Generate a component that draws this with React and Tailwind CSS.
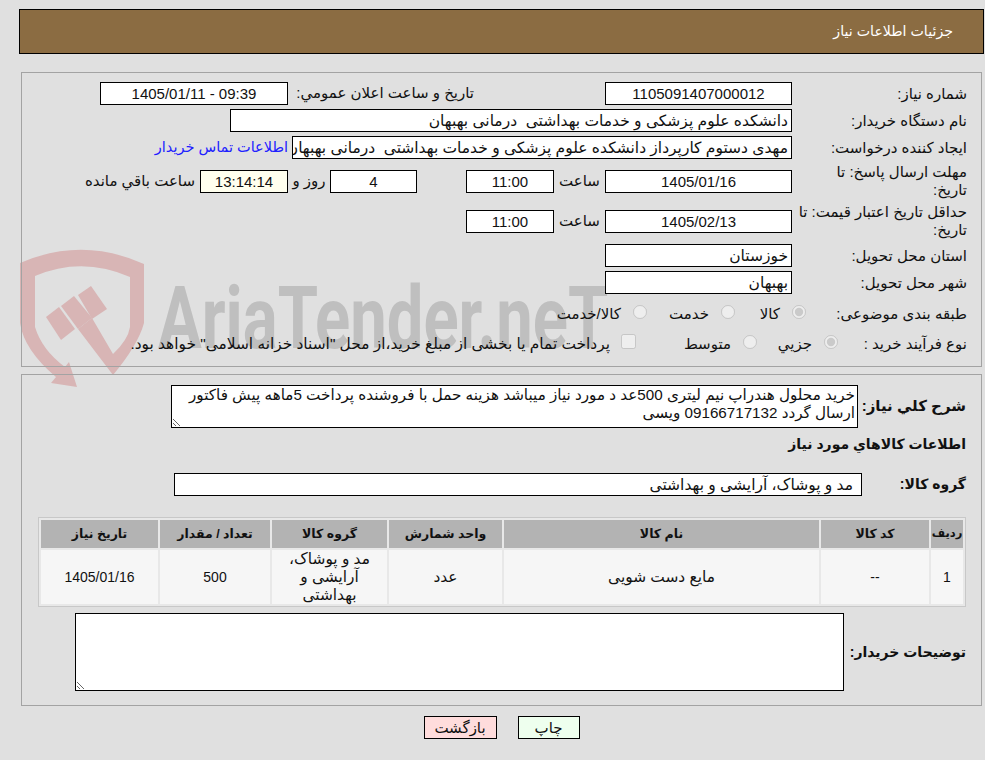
const font = 'font-["Liberation_Sans","DejaVu_Sans",sans-serif]';

// boxed value, same look for every readonly field on the page
const Field = ({ className = '', center, dir, children }) => (
  <div
    dir={dir}
    className={`h-[23px] shrink-0 border border-black bg-white px-[3px] leading-[21px] whitespace-pre overflow-hidden ${center ? 'text-center text-[15px]' : 'text-[15.5px]'} ${className}`}
  >
    {children}
  </div>
);

const Row = ({ label, className = '', children }) => (
  <div className={`flex items-center ${className}`}>
    <div className="w-[175px] shrink-0 leading-[18px]">{label}</div>
    {children}
  </div>
);

const Radio = ({ checked, label, className }) => (
  <div className={`flex items-center shrink-0 ${className}`}>
    <input type="radio" disabled defaultChecked={checked} className="m-0 mb-[5px] w-[14px] h-[14px] shrink-0" />
    <span className="mr-[12px]">{label}</span>
  </div>
);

const Watermark = () => (
  <>
    <svg className="absolute left-0 top-0" width="170" height="395" viewBox="0 0 170 395" fill="#d8b5b5">
      <path d="M20 263 Q82 236 144 264 L144 323 Q138 345 113 375 L78 329 L92 318 L113 354 Q128 340 130 327 L130 277 Q82 256 35 276 L35 327 Q42 350 65 367 L69 362 L77 387 L51 383 L56 377 Q24 350 20 323 Z" />
      <path d="M46 317 L59 307 L75 329 L61 340 Z" />
      <path d="M61 306 L74 296 L92 318 L78 329 Z" />
      <path d="M78 295 L91 286 L107 309 L92 319 Z" />
    </svg>
    <div
      dir="ltr"
      className='absolute left-[158px] top-[266px] origin-left scale-x-[0.74] whitespace-nowrap text-[88px] leading-[104px] font-bold text-[#bfbfbf] font-["Roboto",sans-serif]'
    >
      AriaTender.neT
    </div>
  </>
);

const headers = ['کد کالا', 'نام کالا', 'واحد شمارش', 'گروه کالا', 'تعداد / مقدار', 'تاریخ نیاز'];

const App = () => {
  return (
    <div dir="rtl" className={`relative h-[760px] overflow-hidden bg-[#e0e0e0] text-[15px] text-[#111] ${font}`}>
      <Watermark />

      <div className="relative ml-[19px] mr-[1px] pt-[9px]">
        {/* header bar */}
        <div className="h-[45px] border border-black bg-[#8b6c42] pr-[30px] text-[14.2px] leading-[43px] text-white">
          جزئیات اطلاعات نیاز
        </div>

        {/* main info */}
        <div className="mt-[18px] ml-[2px] mr-[2px] h-[295px] border border-[#a3a3a3] pt-[9px] pr-[14px]">
          <div className="flex flex-col gap-[4px]">
            <Row label="شماره نیاز:">
              <Field center className="w-[187px]">1105091407000012</Field>
              <div className="w-[317px] shrink-0 pr-[131px]">تاریخ و ساعت اعلان عمومي:</div>
              <Field center dir="ltr" className="w-[188px]">1405/01/11 - 09:39</Field>
            </Row>
            <Row label="نام دستگاه خریدار:">
              <Field className="w-[562px]">دانشکده علوم پزشکی و خدمات بهداشتی  درمانی بهبهان</Field>
            </Row>
            <Row label="ایجاد کننده درخواست:">
              <Field className="w-[500px]">مهدی دستوم کارپرداز دانشکده علوم پزشکی و خدمات بهداشتی  درمانی بهبهان</Field>
              <a className="mr-[4px] text-[14.5px] text-[#2020ff] whitespace-nowrap">اطلاعات تماس خریدار</a>
            </Row>
            <Row label={<>مهلت ارسال پاسخ: تا<br />تاریخ:</>}>
              <Field center className="w-[187px]">1405/01/16</Field>
              <div className="w-[51px] shrink-0 text-center">ساعت</div>
              <Field center className="w-[88px]">11:00</Field>
              <div className="w-[49px] shrink-0" />
              <Field center className="w-[87px]">4</Field>
              <div className="w-[42px] shrink-0 text-center">روز و</div>
              <Field center className="w-[88px] !bg-[#ffffee]">13:14:14</Field>
              <div className="mr-[5px] whitespace-nowrap">ساعت باقي مانده</div>
            </Row>
            <Row label={<>حداقل تاریخ اعتبار قیمت: تا<br />تاریخ:</>}>
              <Field center className="w-[187px]">1405/02/13</Field>
              <div className="w-[51px] shrink-0 text-center">ساعت</div>
              <Field center className="w-[88px]">11:00</Field>
            </Row>
            <Row label="استان محل تحویل:" className="mt-[1px]">
              <Field className="w-[187px]">خوزستان</Field>
            </Row>
            <Row label="شهر محل تحویل:">
              <Field className="w-[187px]">بهبهان</Field>
            </Row>
          </div>

          <div className="mt-[9px] flex h-[22px] items-center">
            <div className="w-[161px] shrink-0">طبقه بندی موضوعی:</div>
            <Radio checked label="کالا" className="w-[71px]" />
            <Radio label="خدمت" className="w-[88px]" />
            <Radio label="کالا/خدمت" />
          </div>

          <div className="mt-[8px] flex h-[22px] items-center">
            <div className="w-[129px] shrink-0">نوع فرآیند خرید :</div>
            <Radio checked label="جزیي" className="w-[81px]" />
            <Radio label="متوسط" className="w-[121px]" />
            <input type="checkbox" disabled className="m-0 mb-[5px] w-[15px] h-[15px] shrink-0" />
            <span className="mr-[11px] text-[15.4px] whitespace-nowrap">
              پرداخت تمام یا بخشی از مبلغ خرید،از محل "اسناد خزانه اسلامی" خواهد بود.
            </span>
          </div>
        </div>

        {/* description, goods table */}
        <div className="mt-[7px] ml-[2px] mr-[2px] h-[332px] border border-[#a3a3a3] pt-[10px] pr-[15px]">
          <div className="flex items-center">
            <div className="w-[108px] shrink-0 font-bold">شرح کلي نیاز:</div>
            <textarea
              readOnly
              className="h-[43px] w-[687px] shrink-0 border border-black bg-white px-[2px] text-[15.2px] leading-[18px]"
              defaultValue="خرید محلول هندراپ نیم لیتری 500عد د مورد نیاز میباشد هزینه حمل با فروشنده پرداخت 5ماهه پیش فاکتور ارسال گردد 09166717132 ویسی"
            />
          </div>

          <div className="mt-[7px] h-[18px] text-[14px] leading-[18px] font-bold">اطلاعات کالاهاي مورد نیاز</div>

          <div className="mt-[20px] flex items-center">
            <div className="w-[104px] shrink-0 text-[14px] font-bold">گروه کالا:</div>
            <Field className="w-[688px] pr-[8px]">مد و پوشاک، آرایشی و بهداشتی</Field>
          </div>

          <table className="mt-[21px] w-[928px] table-fixed border-separate border-spacing-[2px] border border-[#c8c8c8] bg-[#e8e8e8] text-center">
            <colgroup>
              <col className="w-[32px]" />
              <col className="w-[108px]" />
              <col className="w-[315px]" />
              <col className="w-[113px]" />
              <col className="w-[115px]" />
              <col className="w-[110px]" />
              <col className="w-[117px]" />
            </colgroup>
            <thead>
              <tr>
                <th className="h-[28px] bg-[#b3b3b3] p-0 text-[11.5px] font-bold">ردیف</th>
                {headers.map((h) => (
                  <th key={h} className="h-[28px] bg-[#b3b3b3] p-0 text-[12.5px] font-bold">
                    {h}
                  </th>
                ))}
              </tr>
            </thead>
            <tbody className="text-[14px] leading-[18px]">
              <tr className="bg-[#f6f6f6]">
                <td className="h-[54px] p-0">1</td>
                <td className="p-0">--</td>
                <td className="p-0 text-[15.4px]">مایع دست شویی</td>
                <td className="p-0 text-[15.4px]">عدد</td>
                <td className="p-0 px-[10px] text-[15.4px]">مد و پوشاک، آرایشی و بهداشتی</td>
                <td className="p-0">500</td>
                <td className="p-0">1405/01/16</td>
              </tr>
            </tbody>
          </table>

          <div className="mt-[6px] flex items-center">
            <div className="w-[122px] shrink-0 text-[14px] font-bold whitespace-nowrap">توضیحات خریدار:</div>
            <textarea readOnly className="h-[78px] w-[769px] shrink-0 border border-black bg-white" />
          </div>
        </div>

        {/* actions */}
        <div className="mt-[10px] flex justify-center gap-[21px]">
          <button className="h-[23px] w-[62px] border border-black bg-[#eeffee] text-[15px]">چاپ</button>
          <button className="h-[23px] w-[73px] border border-black bg-[#ffdcdc] text-[15px]">بازگشت</button>
        </div>
      </div>
    </div>
  );
};

export default App;
